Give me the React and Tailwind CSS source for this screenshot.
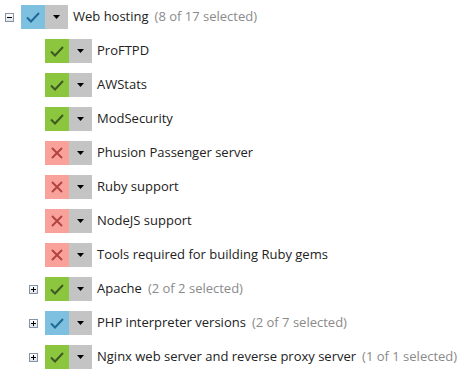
const ROWS = [
  { depth: 0, state: "partial", expander: "minus", label: "Web hosting", count: "(8 of 17 selected)" },
  { depth: 1, state: "on", label: "ProFTPD" },
  { depth: 1, state: "on", label: "AWStats" },
  { depth: 1, state: "on", label: "ModSecurity" },
  { depth: 1, state: "off", label: "Phusion Passenger server" },
  { depth: 1, state: "off", label: "Ruby support" },
  { depth: 1, state: "off", label: "NodeJS support" },
  { depth: 1, state: "off", label: "Tools required for building Ruby gems" },
  { depth: 1, state: "on", expander: "plus", label: "Apache", count: "(2 of 2 selected)" },
  { depth: 1, state: "partial", expander: "plus", label: "PHP interpreter versions", count: "(2 of 7 selected)" },
  { depth: 1, state: "on", expander: "plus", label: "Nginx web server and reverse proxy server", count: "(1 of 1 selected)" },
];

function Expander({ kind }) {
  if (!kind) return null;
  return (
    <div className="w-[9px] h-[9px] border border-[#8393a8] bg-gradient-to-b from-white to-[#dfe3e8] flex items-center justify-center relative">
      <div className="w-[5px] h-[1px] bg-black" />
      {kind === "plus" && <div className="absolute w-[1px] h-[5px] bg-black" />}
    </div>
  );
}

function StateIcon({ state }) {
  if (state === "off") {
    return (
      <svg width="12" height="12" viewBox="0 0 12 12">
        <path d="M1 1L11 11M11 1L1 11" stroke="#b3433e" strokeWidth="2" fill="none" />
      </svg>
    );
  }
  const color = state === "on" ? "#3d5a22" : "#1e6a95";
  return (
    <svg width="14" height="11" viewBox="0 0 14 11">
      <path d="M1 5.5L5 9.5L13 1" stroke={color} strokeWidth="2" fill="none" />
    </svg>
  );
}

const BG = { on: "bg-[#8cc63f]", off: "bg-[#f9a29c]", partial: "bg-[#7ec0df]" };

function Row({ row }) {
  return (
    <div className="flex items-center h-[34px]" style={{ paddingLeft: 5 + row.depth * 24 }}>
      <div className="w-[16px] flex items-center">
        <Expander kind={row.expander} />
      </div>
      <div className={`w-[24px] h-[24px] flex items-center justify-center ${BG[row.state]}`}>
        <StateIcon state={row.state} />
      </div>
      <div className="w-[23px] h-[24px] bg-[#c4c4c4] flex items-center justify-center">
        <svg width="7" height="4" viewBox="0 0 7 4">
          <path d="M0 0H7L3.5 4Z" fill="#000" />
        </svg>
      </div>
      <span className="ml-[5px] text-[#222] whitespace-nowrap">{row.label}</span>
      {row.count && <span className="ml-[6px] text-[#8a8a8a] whitespace-nowrap">{row.count}</span>}
    </div>
  );
}

export default function App() {
  return (
    <div className="w-[471px] h-[383px] bg-white overflow-hidden font-['Open_Sans',sans-serif] text-[13px]">
      {ROWS.map((r, i) => (
        <Row key={i} row={r} />
      ))}
    </div>
  );
}
